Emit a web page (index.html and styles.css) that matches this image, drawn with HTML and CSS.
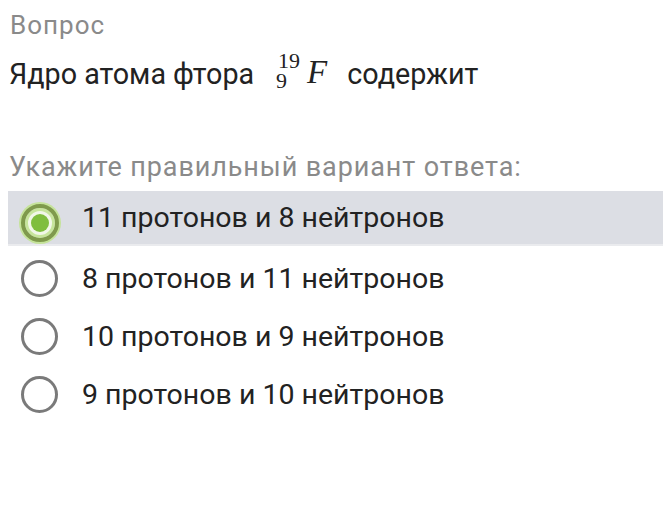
FILE: index.html
```html
<!DOCTYPE html>
<html lang="ru">
<head>
<meta charset="utf-8">
<link rel="stylesheet" href="styles.css">
</head>
<body>
<div class="card">
  <div class="label">Вопрос</div>
  <div class="question">
    <span>Ядро атома фтора</span>
    <span class="nuclide"><span class="scripts"><span class="sup">19</span><span class="sub">9</span></span><span class="elem">F</span></span>
    <span>содержит</span>
  </div>
  <div class="prompt">Укажите правильный вариант ответа:</div>
  <div class="options">
    <div class="option selected"><span class="radio"></span><span class="text">11 протонов и 8 нейтронов</span></div>
    <div class="option"><span class="radio"></span><span class="text">8 протонов и 11 нейтронов</span></div>
    <div class="option"><span class="radio"></span><span class="text">10 протонов и 9 нейтронов</span></div>
    <div class="option"><span class="radio"></span><span class="text">9 протонов и 10 нейтронов</span></div>
  </div>
</div>
</body>
</html>
```
FILE: styles.css
```css
html, body {
  margin: 0;
  padding: 0;
  background: #ffffff;
}
body {
  font-family: Roboto, "Liberation Sans", sans-serif;
  width: 668px;
  height: 524px;
  overflow: hidden;
}
.card {
  padding: 10px 4px 0 8px;
}
.label {
  font-size: 26px;
  letter-spacing: 1px;
  color: #8a8a8a;
  line-height: 30px;
  padding-left: 2px;
}
.question {
  display: flex;
  align-items: center;
  height: 40px;
  font-size: 28.7px;
  color: #222222;
  line-height: 40px;
  padding-left: 1px;
  margin-top: 14px;
}
.nuclide {
  display: inline-flex;
  align-items: center;
  margin: 0 20px 0 22px;
  height: 40px;
}
.scripts {
  display: inline-flex;
  flex-direction: column;
  align-items: flex-start;
  font-size: 22px;
  font-family: "Liberation Serif", serif;
  margin-right: 7px;
}
.sup { line-height: 14px; padding-left: 2px; }
.sub { line-height: 26px; }
.elem {
  font-style: italic;
  font-size: 33px;
  line-height: 40px;
  font-family: "Liberation Serif", serif;
  margin-top: -4px;
}
.prompt {
  font-size: 27px;
  letter-spacing: 0.9px;
  color: #8a8a8a;
  line-height: 30px;
  padding-left: 1px;
  margin-top: 58px;
}
.options {
  margin-top: 9px;
  display: flex;
  flex-direction: column;
}
.option {
  display: flex;
  align-items: center;
  height: 58px;
  gap: 24px;
  padding-left: 13px;
}
.option.selected {
  background: #dcdee4;
  border-bottom: 2px solid #eaebee;
  height: 53px;
  margin-right: 1px;
  margin-bottom: 3px;
}
.text {
  font-size: 28.5px;
  color: #222222;
}
.radio {
  width: 37px;
  height: 37px;
  border: 3px solid #7a7a7a;
  border-radius: 50%;
  box-sizing: border-box;
  flex: none;
  position: relative;
}
.selected .radio {
  width: 38px;
  height: 38px;
  border: 4px solid #7f9a4c;
  box-shadow: 0 0 0 2px #c5e39a, inset 0 0 0 3px #c7e59c;
  background: #f1f7e8;
  margin-right: -1px;
  margin-top: 10px;
}
.selected .radio::after {
  content: "";
  position: absolute;
  left: 50%;
  top: 50%;
  width: 18px;
  height: 18px;
  margin: -9px 0 0 -9px;
  border-radius: 50%;
  background: #7fbe3e;
}
```
